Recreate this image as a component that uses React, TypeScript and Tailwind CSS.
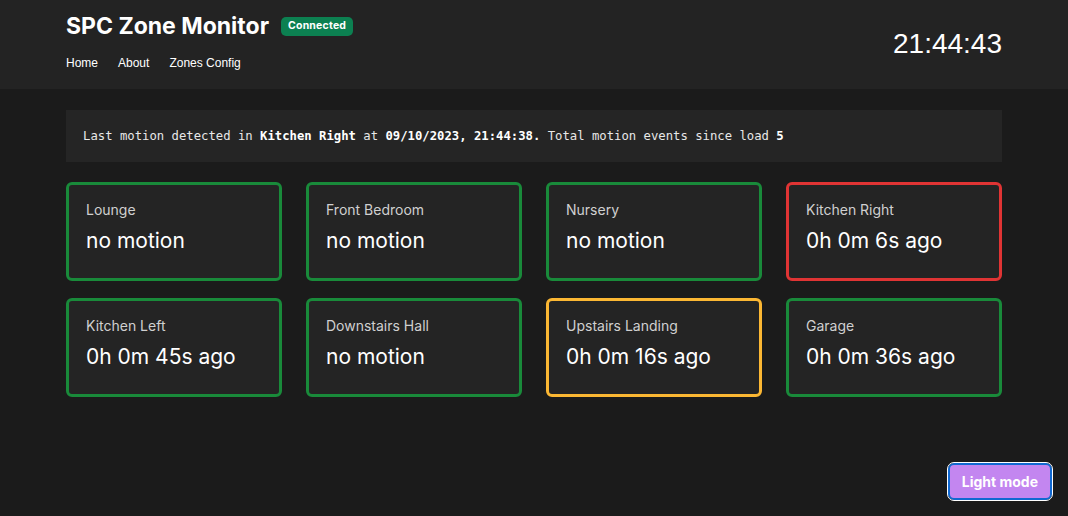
import React from "react";

type Zone = {
  name: string;
  status: string;
  tone: "ok" | "recent" | "active";
};

const zones: Zone[] = [
  { name: "Lounge", status: "no motion", tone: "ok" },
  { name: "Front Bedroom", status: "no motion", tone: "ok" },
  { name: "Nursery", status: "no motion", tone: "ok" },
  { name: "Kitchen Right", status: "0h 0m 6s ago", tone: "active" },
  { name: "Kitchen Left", status: "0h 0m 45s ago", tone: "ok" },
  { name: "Downstairs Hall", status: "no motion", tone: "ok" },
  { name: "Upstairs Landing", status: "0h 0m 16s ago", tone: "recent" },
  { name: "Garage", status: "0h 0m 36s ago", tone: "ok" },
];

const borderFor = {
  ok: "border-[#198a3a]",
  recent: "border-[#fbb733]",
  active: "border-[#e03434]",
};

export default function App() {
  return (
    <div className="min-h-[516px] bg-[#1b1b1b] text-white font-['Inter',sans-serif]">
      {/* Header */}
      <header className="bg-[#232323] h-[89px]">
        <div className="w-[936px] mx-auto flex justify-between">
          <div className="pt-[12px]">
            <div className="flex items-center gap-[12px]">
              <h1 className="text-[23px] font-bold leading-[28px]">SPC Zone Monitor</h1>
              <span className="bg-[#0c8051] rounded-[5px] px-[7px] h-[19px] flex items-center text-[10.5px] font-bold leading-none tracking-[0.2px]">
                Connected
              </span>
            </div>
            <nav className="flex gap-[20px] mt-[14px] text-[12px] font-['Liberation_Sans',Arial,sans-serif]">
              <a>Home</a>
              <a>About</a>
              <a>Zones Config</a>
            </nav>
          </div>
          <div className="pt-[28px] text-[28px] leading-[32px] font-['Liberation_Sans',Arial,sans-serif]">
            21:44:43
          </div>
        </div>
      </header>

      <main className="w-[936px] mx-auto pt-[21px]">
        {/* Last motion banner */}
        <div className="bg-[#252525] h-[52px] flex items-center px-[17px] text-[12.25px] font-['DejaVu_Sans_Mono',monospace] text-[#e8e8e8]">
          <p>
            Last motion detected in <b className="text-white">Kitchen Right</b> at{" "}
            <b className="text-white">09/10/2023, 21:44:38.</b> Total motion events since load{" "}
            <b className="text-white">5</b>
          </p>
        </div>

        {/* Zone cards */}
        <div className="grid grid-cols-4 gap-x-[24px] gap-y-[17px] mt-[20px]">
          {zones.map((z) => (
            <div
              key={z.name}
              className={`h-[99px] rounded-[6px] border-[3px] bg-[#242424] pl-[17px] pt-[16px] ${borderFor[z.tone]}`}
            >
              <div className="text-[14px] leading-[18px] text-[#d0d0d0]">{z.name}</div>
              <div className="text-[21px] leading-[26px] mt-[9px]">{z.status}</div>
            </div>
          ))}
        </div>
      </main>

      <button className="fixed right-[16px] bottom-[16px] h-[37px] px-[12px] rounded-[6px] bg-[#c386f0] border-2 border-[#1169d1] outline outline-1 outline-white text-[14px] font-bold text-white">
        Light mode
      </button>
    </div>
  );
}
